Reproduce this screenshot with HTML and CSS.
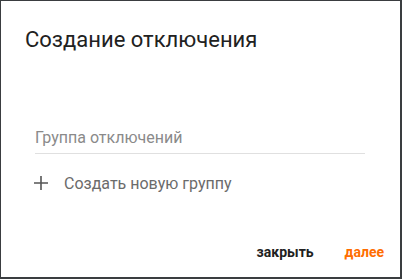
FILE: index.html
```html
<!DOCTYPE html>
<html lang="ru">
<head>
    <meta charset="UTF-8">
    <meta name="viewport" content="width=device-width, initial-scale=1.0">
    <title>Создание отключения</title>
    <link rel="stylesheet" href="styles.css">
</head>
<body>
    <div class="dialog">
        <h1 class="dialog-title">Создание отключения</h1>
        <div class="dialog-body">
            <div class="field">
                <span class="field-label">Группа отключений</span>
            </div>
            <div class="add-group">
                <svg class="add-icon" width="14" height="14" viewBox="0 0 14 14">
                    <path d="M7 0v14M0 7h14" stroke="#555" stroke-width="1.6" fill="none"/>
                </svg>
                <span>Создать новую группу</span>
            </div>
        </div>
        <div class="dialog-actions">
            <button class="btn">закрыть</button>
            <button class="btn btn-primary">далее</button>
        </div>
    </div>
</body>
</html>
```

FILE: styles.css
```css
*{
    box-sizing: border-box;
}
body{
    margin: 0;
    background-color: #3a3d40;
    font-family: Roboto, "Noto Sans", sans-serif;
    height: 279px;
    overflow: hidden;
}
.dialog{
    margin: 1px 0 0 1px;
    width: 399px;
    height: 276px;
    background-color: #fff;
    display: flex;
    flex-direction: column;
    padding: 24px 16px 15px 24px;
}
.dialog-title{
    margin: 0;
    font-size: 22px;
    font-weight: 400;
    line-height: 30px;
    color: #212121;
}
.dialog-body{
    flex: 1;
    padding: 0 19px 0 10px;
}
.field{
    margin-top: 73px;
    height: 26px;
    border-bottom: 1px solid #e0e0e0;
}
.field-label{
    display: block;
    font-size: 16px;
    line-height: 20px;
    color: #8a8a8a;
}
.add-group{
    display: flex;
    align-items: center;
    margin-top: 19px;
    font-size: 16px;
    color: #6b6b6b;
    height: 20px;
}
.add-icon{
    margin: 0 16px 0 -1px;
}
.dialog-actions{
    display: flex;
    justify-content: flex-end;
    gap: 31px;
}
.btn{
    border: none;
    background: none;
    padding: 0;
    font-family: inherit;
    font-size: 14px;
    font-weight: 700;
    line-height: 20px;
    color: #212121;
}
.btn-primary{
    color: #ff6d00;
}
```
